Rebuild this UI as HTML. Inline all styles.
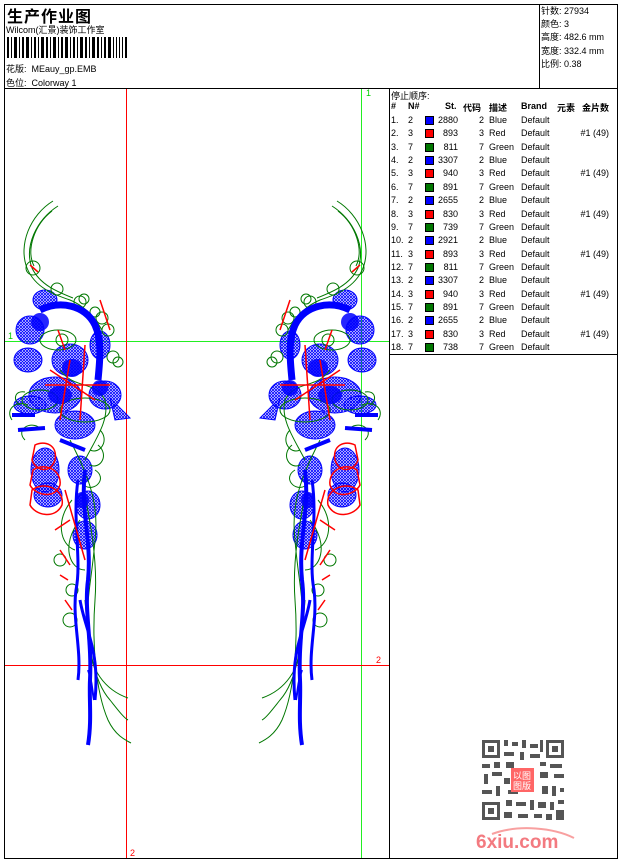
<!DOCTYPE html>
<html><head><meta charset="utf-8"><style>
*{margin:0;padding:0;box-sizing:border-box}
body{width:620px;height:860px;background:#fff;position:relative;overflow:hidden;font-family:"Liberation Sans","Noto Sans CJK SC",sans-serif;font-size:9px;color:#000}
.a{position:absolute;white-space:nowrap}
.r{position:absolute;height:13px;line-height:13px;left:389px;width:228px}
.r span{position:absolute}
.sw{position:absolute;left:36px;top:2px;width:9px;height:9px;border:1px solid #000}
</style></head><body>
<div class="a" style="left:4px;top:4px;width:614px;height:855px;border:1px solid #000"></div>
<div class="a" style="left:4px;top:88px;width:614px;height:1px;background:#000"></div>
<div class="a" style="left:539px;top:4px;width:1px;height:84px;background:#000"></div>
<div class="a" style="left:361px;top:89px;width:1px;height:769px;background:#2e2"></div>
<div class="a" style="left:5px;top:341px;width:384px;height:1px;background:#2e2"></div>
<div class="a" style="left:126px;top:89px;width:1px;height:769px;background:#f00"></div>
<div class="a" style="left:5px;top:665px;width:384px;height:1px;background:#f00"></div>
<div class="a" style="left:389px;top:88px;width:1px;height:770px;background:#000"></div>
<div class="a" style="left:389px;top:354px;width:228px;height:1px;background:#000"></div>
<div class="a" style="left:7px;top:3px;font-size:16px;font-weight:bold;letter-spacing:1px">生产作业图</div>
<div class="a" style="left:6px;top:23px;font-size:9px">Wilcom(汇景)装饰工作室</div>
<svg class="a" style="left:7px;top:37px" width="122" height="21">
<g fill="#000">
<rect x="0" y="0" width="2" height="21"/><rect x="4" y="0" width="1" height="21"/><rect x="7" y="0" width="3" height="21"/><rect x="12" y="0" width="1" height="21"/><rect x="15" y="0" width="2" height="21"/><rect x="19" y="0" width="3" height="21"/><rect x="24" y="0" width="1" height="21"/><rect x="27" y="0" width="2" height="21"/><rect x="31" y="0" width="1" height="21"/><rect x="34" y="0" width="3" height="21"/><rect x="39" y="0" width="2" height="21"/><rect x="43" y="0" width="1" height="21"/><rect x="46" y="0" width="3" height="21"/><rect x="51" y="0" width="1" height="21"/><rect x="54" y="0" width="2" height="21"/><rect x="58" y="0" width="3" height="21"/><rect x="63" y="0" width="1" height="21"/><rect x="66" y="0" width="2" height="21"/><rect x="70" y="0" width="1" height="21"/><rect x="73" y="0" width="3" height="21"/><rect x="78" y="0" width="2" height="21"/><rect x="82" y="0" width="1" height="21"/><rect x="85" y="0" width="3" height="21"/><rect x="90" y="0" width="2" height="21"/><rect x="94" y="0" width="1" height="21"/><rect x="97" y="0" width="2" height="21"/><rect x="101" y="0" width="3" height="21"/><rect x="106" y="0" width="1" height="21"/><rect x="109" y="0" width="1" height="21"/><rect x="112" y="0" width="1" height="21"/><rect x="115" y="0" width="1" height="21"/><rect x="118" y="0" width="2" height="21"/>
</g></svg>
<div class="a" style="left:6px;top:62px">花版:&nbsp; MEauy_gp.EMB</div>
<div class="a" style="left:6px;top:76px">色位:&nbsp; Colorway 1</div>
<div class="a" style="left:541px;top:5px;line-height:13.2px">针数: 27934<br>颜色: 3<br>高度: 482.6 mm<br>宽度: 332.4 mm<br>比例: 0.38</div>

<svg class="a" style="left:0;top:0" width="390" height="860">
<text x="366" y="96" fill="#0c0" font-size="9" font-family="Liberation Sans">1</text>
<text x="8" y="339" fill="#0c0" font-size="9" font-family="Liberation Sans">1</text>
<text x="376" y="663" fill="#f00" font-size="9" font-family="Liberation Sans">2</text>
<text x="130" y="856" fill="#f00" font-size="9" font-family="Liberation Sans">2</text>
<defs>
<pattern id="h" width="3" height="3" patternUnits="userSpaceOnUse"><path d="M0,0 L3,3 M3,0 L0,3" stroke="#00f" stroke-width="0.8"/></pattern>
<g id="d">
<g fill="url(#h)" stroke="#00f" stroke-width="1">
<ellipse cx="45" cy="300" rx="12" ry="10"/>
<ellipse cx="30" cy="330" rx="14" ry="14"/><ellipse cx="28" cy="360" rx="14" ry="12"/>
<ellipse cx="70" cy="360" rx="18" ry="16"/><ellipse cx="100" cy="345" rx="10" ry="14"/>
<ellipse cx="55" cy="395" rx="26" ry="18"/><ellipse cx="105" cy="395" rx="16" ry="14"/>
<ellipse cx="75" cy="425" rx="20" ry="14"/><ellipse cx="30" cy="405" rx="16" ry="9"/>
<path d="M110,398 L130,418 L115,420 Z"/>
<ellipse cx="80" cy="470" rx="12" ry="14"/><ellipse cx="88" cy="505" rx="12" ry="14"/><ellipse cx="85" cy="535" rx="12" ry="14"/>
<ellipse cx="45" cy="470" rx="14" ry="22"/><ellipse cx="48" cy="495" rx="14" ry="12"/>
</g>
<g fill="none" stroke="#070" stroke-width="1">
<path d="M53,201 C30,215 18,245 27,268 C35,288 55,295 70,300 C85,306 95,318 102,330"/>
<path d="M58,206 C36,220 24,247 32,268 C40,285 58,292 73,298"/>
<path d="M52,211 C34,225 26,250 34,266"/>
<circle cx="33" cy="268" r="7"/><circle cx="57" cy="289" r="6"/><circle cx="80" cy="302" r="6"/><circle cx="84" cy="299" r="5"/>
<circle cx="102" cy="318" r="6"/><circle cx="108" cy="330" r="6"/><circle cx="113" cy="357" r="6"/><circle cx="62" cy="340" r="6"/>
<circle cx="118" cy="362" r="5"/><circle cx="95" cy="312" r="5"/>
<path d="M20,405 C12,400 15,390 25,392 M12,420 C5,410 15,400 28,405 M25,440 C15,430 30,420 40,428"/>
<path d="M100,430 C110,440 100,455 90,450 M98,445 C110,455 100,470 90,465 M95,470 C108,478 95,492 85,486"/>
<path d="M60,370 C75,390 95,380 105,400 C110,420 95,440 85,460"/>
<path d="M70,440 C85,470 100,500 95,540 C92,580 85,600 88,640 C90,670 105,690 128,698"/>
<path d="M82,480 C90,520 98,560 95,600 C92,640 95,690 108,720 C115,735 125,740 131,743"/>
<path d="M85,600 C88,640 92,680 110,700 C118,710 124,718 128,720"/>
<ellipse cx="58" cy="340" rx="18" ry="10"/><ellipse cx="40" cy="400" rx="18" ry="10"/><ellipse cx="85" cy="410" rx="25" ry="12"/>
<path d="M72,500 C55,520 60,545 75,550 M80,520 C60,545 70,570 85,570"/>
<circle cx="60" cy="560" r="6"/><circle cx="72" cy="590" r="6"/><circle cx="70" cy="620" r="7"/>
</g>
<g fill="none" stroke="#00f">
<path d="M40,310 C60,300 85,305 95,325 C102,340 100,360 98,380" stroke-width="7"/>
<path d="M85,470 C80,510 92,540 88,580 C84,610 92,640 90,680 C89,700 92,720 88,745" stroke-width="4"/>
<path d="M78,480 C72,520 82,560 76,590 C72,620 82,650 78,680" stroke-width="3"/>
<path d="M80,600 C85,630 100,650 95,700" stroke-width="3"/>
<path d="M88,670 C92,680 92,690 94,700" stroke-width="2"/>
<path d="M12,415 L35,415 M18,430 L45,428 M60,440 L85,450" stroke-width="4"/>
</g>
<g fill="#00f" opacity="0.85">
<ellipse cx="40" cy="322" rx="9" ry="9"/><ellipse cx="72" cy="368" rx="10" ry="9"/>
<ellipse cx="60" cy="395" rx="12" ry="9"/><ellipse cx="100" cy="388" rx="8" ry="8"/>
<ellipse cx="82" cy="500" rx="7" ry="8"/>
</g>
<g fill="none" stroke="#f00" stroke-width="1.5">
<path d="M35,445 C45,440 58,445 55,460 C50,475 35,470 32,460 Z"/>
<path d="M33,470 C45,462 62,470 60,485 C55,500 35,495 30,485 Z"/>
<path d="M32,490 C45,480 65,490 62,505 C55,520 35,515 30,505 Z"/>
<path d="M50,370 L95,400 M70,360 L60,420 M85,345 L80,420 M45,385 L110,385 M58,330 L65,350 M30,265 L38,272 M100,300 L110,330"/>
<path d="M65,490 L85,560 M70,520 L55,530 M60,550 L70,565 M60,575 L68,580 M65,600 L72,610"/>
</g>
</g>
</defs>
<use href="#d"/>
<use href="#d" transform="translate(390,0) scale(-1,1)"/>
</svg>

<div class="a" style="left:391px;top:89px">停止顺序:</div>
<div class="a" style="left:389px;top:101px;width:228px;height:12px;font-weight:bold;text-decoration:underline">
<span class="a" style="left:2px">#</span><span class="a" style="left:19px">N#</span><span class="a" style="left:56px">St.</span><span class="a" style="left:74px">代码</span><span class="a" style="left:100px">描述</span><span class="a" style="left:132px">Brand</span><span class="a" style="left:168px">元素</span><span class="a" style="left:193px">金片数</span>
</div>
<div id="t"></div>
<script>
var rows=[["1.","2","#00f","2880","2","Blue",""],["2.","3","#f00","893","3","Red","#1 (49)"],["3.","7","#070","811","7","Green",""],["4.","2","#00f","3307","2","Blue",""],["5.","3","#f00","940","3","Red","#1 (49)"],["6.","7","#070","891","7","Green",""],["7.","2","#00f","2655","2","Blue",""],["8.","3","#f00","830","3","Red","#1 (49)"],["9.","7","#070","739","7","Green",""],["10.","2","#00f","2921","2","Blue",""],["11.","3","#f00","893","3","Red","#1 (49)"],["12.","7","#070","811","7","Green",""],["13.","2","#00f","3307","2","Blue",""],["14.","3","#f00","940","3","Red","#1 (49)"],["15.","7","#070","891","7","Green",""],["16.","2","#00f","2655","2","Blue",""],["17.","3","#f00","830","3","Red","#1 (49)"],["18.","7","#070","738","7","Green",""]];
var h="";rows.forEach(function(r,i){var y=114+i*13.36;
h+='<div class="r" style="top:'+y+'px"><span style="left:2px">'+r[0]+'</span><span style="left:19px">'+r[1]+'</span><div class="sw" style="background:'+r[2]+'"></div><span style="right:159px">'+r[3]+'</span><span style="right:133px">'+r[4]+'</span><span style="left:100px">'+r[5]+'</span><span style="left:132px">Default</span><span style="right:8px">'+r[6]+'</span></div>';});
document.getElementById("t").innerHTML=h;
</script>

<svg class="a" style="left:480px;top:738px" width="86" height="84">
<g fill="#555">
<rect x="2" y="2" width="18" height="18"/><rect x="66" y="2" width="18" height="18"/><rect x="2" y="64" width="18" height="18"/>
</g>
<g fill="#fff"><rect x="5" y="5" width="12" height="12"/><rect x="69" y="5" width="12" height="12"/><rect x="5" y="67" width="12" height="12"/></g>
<g fill="#555"><rect x="8" y="8" width="6" height="6"/><rect x="72" y="8" width="6" height="6"/><rect x="8" y="70" width="6" height="6"/>
<rect x="24" y="2" width="4" height="6"/><rect x="32" y="4" width="6" height="4"/><rect x="42" y="2" width="4" height="8"/><rect x="50" y="6" width="8" height="4"/><rect x="60" y="2" width="3" height="12"/>
<rect x="24" y="14" width="10" height="4"/><rect x="40" y="14" width="4" height="8"/><rect x="50" y="16" width="10" height="4"/>
<rect x="2" y="26" width="8" height="4"/><rect x="14" y="24" width="6" height="6"/><rect x="26" y="24" width="8" height="6"/><rect x="60" y="24" width="6" height="4"/><rect x="70" y="26" width="12" height="4"/>
<rect x="4" y="36" width="4" height="10"/><rect x="12" y="34" width="10" height="4"/><rect x="24" y="40" width="6" height="6"/><rect x="60" y="34" width="8" height="6"/><rect x="74" y="36" width="10" height="4"/>
<rect x="2" y="52" width="10" height="4"/><rect x="16" y="48" width="4" height="10"/><rect x="28" y="52" width="10" height="4"/><rect x="62" y="48" width="6" height="8"/><rect x="72" y="48" width="4" height="10"/><rect x="80" y="50" width="4" height="4"/>
<rect x="26" y="62" width="6" height="6"/><rect x="36" y="64" width="10" height="4"/><rect x="50" y="62" width="4" height="10"/><rect x="58" y="64" width="8" height="6"/><rect x="70" y="64" width="4" height="8"/><rect x="78" y="62" width="6" height="4"/>
<rect x="24" y="74" width="8" height="6"/><rect x="38" y="76" width="10" height="4"/><rect x="54" y="76" width="8" height="4"/><rect x="66" y="76" width="6" height="6"/><rect x="76" y="72" width="8" height="10"/>
</g>
<rect x="31" y="30" width="23" height="24" fill="#f66"/>
<text x="33" y="41" font-size="9" fill="#fff" font-family="Noto Sans CJK SC">以图</text>
<text x="33" y="51" font-size="9" fill="#fff" font-family="Noto Sans CJK SC">图版</text>
</svg>
<svg class="a" style="left:474px;top:826px" width="104" height="28">
<path d="M18,8 C45,-2 80,2 100,12" stroke="#f8a0a0" stroke-width="2" fill="none"/>
<text x="2" y="22" font-size="19" font-weight="bold" fill="#f37a80" font-family="Liberation Sans">6xiu.com</text>
</svg>
</body></html>
